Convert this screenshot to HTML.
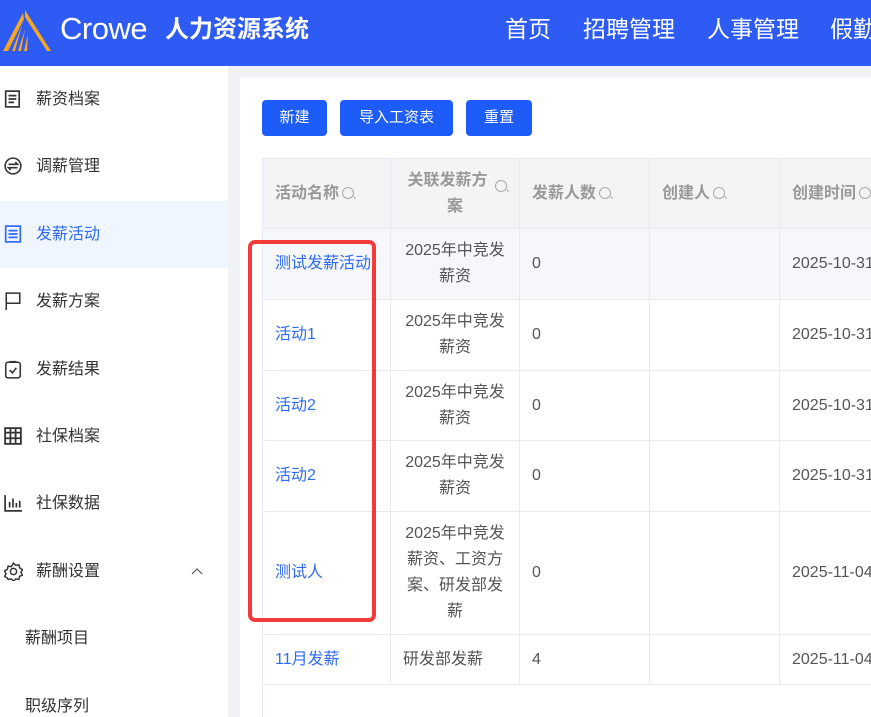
<!DOCTYPE html>
<html><head><meta charset="utf-8"><style>
*{margin:0;padding:0;box-sizing:border-box}
html,body{width:871px;height:717px;overflow:hidden}
body{background:#f0f2f5;font-family:"Liberation Sans","Noto Sans CJK SC",sans-serif;position:relative}
.hdr{position:absolute;left:0;top:0;width:871px;height:66px;background:#2f5bf5;color:#fff}
.hdr .t{position:absolute;top:13px;font-size:23px;white-space:nowrap;line-height:32px}
.side{position:absolute;left:0;top:66px;width:228px;height:651px;background:#fff}
.mi{position:absolute;left:0;width:228px;height:67px;font-size:16px;color:#333;line-height:67px}
.mi span{position:absolute;left:36px}
.mi svg{position:absolute;left:4px;top:24px}
.sub span{left:25px}
.act{background:#f0f6ff;color:#2f6bf5}
.main{position:absolute;left:240px;top:77px;width:640px;height:640px;background:#fff}
.btn{position:absolute;top:100px;height:36px;background:#1d5cf8;color:#fff;border-radius:4px;font-size:15px;line-height:36px;text-align:center}
table{position:absolute;left:262px;top:158px;border-collapse:collapse;font-size:16px;color:#555;table-layout:fixed;width:650px}
td,th{border:1px solid #e8ebf2;padding:0 12px;vertical-align:middle;line-height:26px}
th{background:#f4f4f6;color:#999;font-weight:bold;text-align:left;height:70px;font-size:16px}
td.c{text-align:center}
a{color:#2f6bf5;text-decoration:none}
.q{display:inline-block;width:12px;height:12px;border:1.3px solid #aaa;border-radius:50%;position:relative;margin-left:3px;vertical-align:-1px}
.q:after{content:"";position:absolute;width:3px;height:1.3px;background:#aaa;right:-3px;bottom:-1px;transform:rotate(45deg)}
.red{position:absolute;left:248px;top:240px;width:128px;height:382px;border:4px solid #f23a3a;border-radius:7px}
</style></head><body>
<div class="hdr">
<svg style="position:absolute;left:3px;top:9px" width="48" height="42" viewBox="0 0 48 42"><path d="M22 1 L48 42 L44 42 L22 8 Z" fill="#f5a623"/><path d="M20 4 L0 42 L5 42 L21 10Z" fill="#f5a623"/><path d="M19 16 L9 42 L12 42 Z M22 20 L15 42 L18 42Z M25 25 L21 42 L24 42Z" fill="#f5a623"/></svg>
<div class="t" style="left:60px;top:13px;font-size:31px;letter-spacing:-0.5px">Crowe</div>
<div class="t" style="left:165px;top:14px;font-weight:bold;font-size:24px">人力资源系统</div>
<div class="t" style="left:505px">首页</div>
<div class="t" style="left:583px">招聘管理</div>
<div class="t" style="left:707px">人事管理</div>
<div class="t" style="left:830px">假勤</div>
</div>
<div class="side">
<div class="mi" style="top:0px"><svg width="18" height="18" viewBox="0 0 16 16" fill="none" stroke="#333" stroke-width="1.5"><rect x="1.5" y="1" width="12" height="14"/><path d="M4 5h7M4 8h7M4 11h5"/></svg><span>薪资档案</span></div>
<div class="mi" style="top:67px"><svg width="18" height="18" viewBox="0 0 16 16" fill="none" stroke="#333" stroke-width="1.4"><circle cx="8" cy="8" r="7"/><path d="M4 6.5h8l-2-2M12 9.5H4l2 2"/></svg><span>调薪管理</span></div>
<div class="mi act" style="top:135px"><svg width="18" height="18" viewBox="0 0 16 16" fill="none" stroke="#2f6bf5" stroke-width="1.5"><rect x="1.5" y="1" width="13" height="14"/><path d="M4 5h8M4 8h8M4 11h8"/></svg><span>发薪活动</span></div>
<div class="mi" style="top:202px"><svg width="18" height="18" viewBox="0 0 16 16" fill="none" stroke="#333" stroke-width="1.4"><path d="M2 16V1h12v9H2"/></svg><span>发薪方案</span></div>
<div class="mi" style="top:270px"><svg width="18" height="19" viewBox="0 0 16 17" fill="none" stroke="#333" stroke-width="1.4"><rect x="1.5" y="2" width="13" height="14" rx="2"/><path d="M5 1.5h6M5 9l2.5 2.5L11 7"/></svg><span>发薪结果</span></div>
<div class="mi" style="top:337px"><svg width="18" height="18" viewBox="0 0 16 16" fill="none" stroke="#333" stroke-width="1.6"><rect x="1" y="1" width="14" height="14"/><path d="M5.7 1v14M10.3 1v14M1 5h14M1 10h14"/></svg><span>社保档案</span></div>
<div class="mi" style="top:404px"><svg width="18" height="18" viewBox="0 0 16 16" fill="none" stroke="#333" stroke-width="1.5"><path d="M1 1v14h15M5 12V7M8 12V4M11 12V8M14 12V6"/></svg><span>社保数据</span></div>
<div class="mi" style="top:472px"><svg width="19" height="19" viewBox="0 0 17 17" fill="none" stroke="#333" stroke-width="1.3"><path d="M8.5 1l2 2 2.8-.5.7 2.8 2.5 1.5-1.3 2.5 1.3 2.5-2.5 1-.7 2.8-2.8-.5-2 2-2-2-2.8.5L3 14.3.5 13 1.8 10.5.5 8 3 6.5l.7-2.8 2.8.5z"/><circle cx="8.5" cy="8.5" r="2.8"/></svg><span>薪酬设置</span><svg style="left:191px;top:30px" width="12" height="7" viewBox="0 0 12 7" fill="none" stroke="#555" stroke-width="1.2"><path d="M1 6l5-5 5 5"/></svg></div>
<div class="mi sub" style="top:539px"><span>薪酬项目</span></div>
<div class="mi sub" style="top:607px"><span>职级序列</span></div>
</div>
<div class="main"></div>
<div class="btn" style="left:262px;width:65px">新建</div>
<div class="btn" style="left:340px;width:113px">导入工资表</div>
<div class="btn" style="left:466px;width:66px">重置</div>
<table>
<colgroup><col style="width:128px"><col style="width:129px"><col style="width:130px"><col style="width:130px"><col style="width:133px"></colgroup>
<tr><th>活动名称<i class="q"></i></th><th style="text-align:center">关联发薪方<i class="q" style="float:right;margin-top:12px"></i><br>案</th><th>发薪人数<i class="q"></i></th><th>创建人<i class="q"></i></th><th>创建时间<i class="q"></i></th></tr>
<tr style="height:71px;background:#f5f7fb"><td style="padding-right:0;white-space:nowrap"><a>测试发薪活动</a></td><td class="c">2025年中竞发薪资</td><td>0</td><td></td><td>2025-10-31</td></tr>
<tr style="height:71px"><td><a>活动1</a></td><td class="c">2025年中竞发薪资</td><td>0</td><td></td><td>2025-10-31</td></tr>
<tr style="height:70px"><td><a>活动2</a></td><td class="c">2025年中竞发薪资</td><td>0</td><td></td><td>2025-10-31</td></tr>
<tr style="height:71px"><td><a>活动2</a></td><td class="c">2025年中竞发薪资</td><td>0</td><td></td><td>2025-10-31</td></tr>
<tr style="height:123px"><td><a>测试人</a></td><td class="c">2025年中竞发薪资、工资方案、研发部发薪</td><td>0</td><td></td><td>2025-11-04</td></tr>
<tr style="height:50px"><td><a>11月发薪</a></td><td>研发部发薪</td><td>4</td><td></td><td>2025-11-04</td></tr>
</table>
<div style="position:absolute;left:262px;top:684px;width:1px;height:33px;background:#e8ebf2"></div>
<div class="red"></div>
</body></html>
